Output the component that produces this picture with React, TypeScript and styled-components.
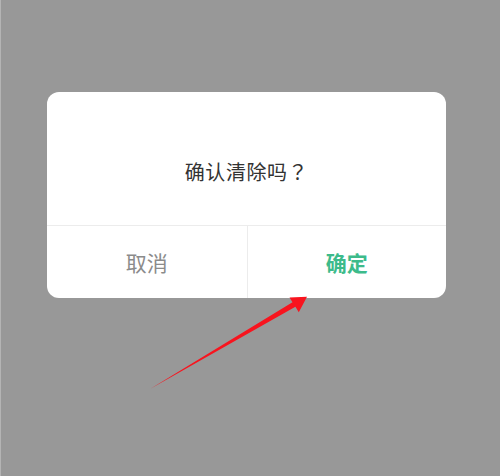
import React from "react";
import styled, { createGlobalStyle } from "styled-components";

const GlobalStyle = createGlobalStyle`
  html, body {
    margin: 0;
    padding: 0;
    background: #989898;
  }
  body {
    font-family: "Noto Sans CJK SC", "Noto Sans", sans-serif;
  }
`;

const Page = styled.div`
  position: relative;
  width: 500px;
  height: 476px;
  box-sizing: border-box;
  padding: 92px 0 0 47px;
  background: #989898;
  border-left: 1px solid #b4b4b4;
  overflow: hidden;
`;

const Dialog = styled.div`
  width: 399px;
  display: flex;
  flex-direction: column;
  background: #ffffff;
  border-radius: 12px;
  overflow: hidden;
  margin-left: -1px;
`;

const Message = styled.div`
  height: 133px;
  box-sizing: border-box;
  padding-top: 25px;
  display: flex;
  align-items: center;
  justify-content: center;
  color: #333333;
  font-size: 20px;
  letter-spacing: 0.6px;
`;

// centred full-width question mark, as in traditional/Japanese typesetting
const Punct = styled.span`
  font-family: "Noto Sans CJK TC", "Noto Sans CJK SC", sans-serif;
`;

const Actions = styled.div`
  display: grid;
  grid-template-columns: 1fr 1fr;
  height: 72px;
  border-top: 1px solid #ececec;
`;

const ActionButton = styled.button<{ $primary?: boolean }>`
  display: flex;
  align-items: center;
  justify-content: center;
  padding: 0;
  border: none;
  background: transparent;
  font-family: inherit;
  font-size: 21px;
  font-weight: ${({ $primary }) => ($primary ? 700 : 400)};
  color: ${({ $primary }) => ($primary ? "#3dbb8b" : "#8b8b8b")};
  & + & {
    border-left: 1px solid #ececec;
  }
`;

const Annotation = styled.svg`
  position: absolute;
  left: 0;
  top: 0;
  width: 500px;
  height: 476px;
  pointer-events: none;
`;

export default function App() {
  return (
    <>
      <GlobalStyle />
      <Page>
        <Dialog>
          <Message>
            确认清除吗<Punct>？</Punct>
          </Message>
          <Actions>
            <ActionButton>取消</ActionButton>
            <ActionButton $primary>确定</ActionButton>
          </Actions>
        </Dialog>
        <Annotation viewBox="0 0 500 476">
          <polygon
            points="149,389 291.5,302.2 288.5,297.6 306,296.8 297.8,312.2 294.4,306.8"
            fill="#f8141e"
          />
        </Annotation>
      </Page>
    </>
  );
}
